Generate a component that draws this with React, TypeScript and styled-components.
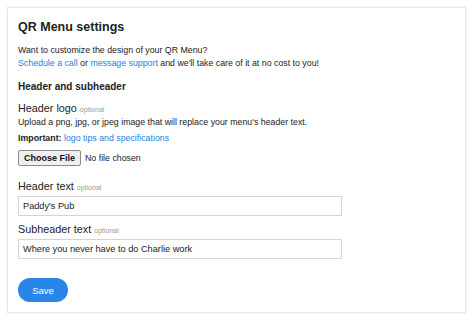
import React from "react";
import styled, { createGlobalStyle } from "styled-components";

const Global = createGlobalStyle`
  html, body { margin: 0; padding: 0; background: #fff; }
  body { font-family: "Liberation Sans", Arial, sans-serif; color: #222; }
`;

const Page = styled.div`
  padding: 7px 8px 8px 7px;
`;

const Card = styled.div`
  background: #fff;
  border: 1px solid #e6e6e6;
  box-shadow: 0 0 3px rgba(0, 0, 0, 0.08);
  padding: 12px 10px 10px 10px;
  height: 306px;
  box-sizing: border-box;
  display: flex;
  flex-direction: column;
`;

const Title = styled.h1`
  margin: 0 0 9px;
  font-size: 12.5px;
  line-height: 15px;
  font-weight: bold;
  color: #222;
`;

const Text = styled.p<{ $mb?: number }>`
  margin: 0 0 ${(p) => p.$mb ?? 0}px;
  font-size: 8.8px;
  line-height: 12.5px;
  color: #222;
`;

const A = styled.a`
  color: #1a7fe0;
  text-decoration: none;
`;

const Section = styled.h2`
  margin: 0 0 9px;
  font-size: 10px;
  line-height: 12px;
  font-weight: bold;
  color: #222;
`;

const Label = styled.div<{ $mb?: number }>`
  font-size: 10.8px;
  line-height: 12px;
  color: #222;
  margin-bottom: ${(p) => p.$mb ?? 1}px;
`;

const Optional = styled.span`
  font-size: 7px;
  color: #9a9a9a;
  margin-left: 3px;
`;

const FileRow = styled.div`
  display: flex;
  align-items: center;
  gap: 4px;
  height: 16px;
  margin: 6px 0 14px;
  font-size: 8.8px;
`;

const FileButton = styled.button`
  font-family: "Liberation Sans", Arial, sans-serif;
  font-weight: bold;
  font-size: 9px;
  height: 16px;
  padding: 0 5px;
  border: 1px solid #8a8a8a;
  border-radius: 2px;
  background: #efefef;
  color: #111;
`;

const Input = styled.input`
  width: 324px;
  height: 20px;
  box-sizing: border-box;
  border: 1px solid #d4d4d4;
  padding: 0 4px;
  font-family: "Liberation Sans", Arial, sans-serif;
  font-size: 9.2px;
  color: #222;
  outline: none;
`;

const Field = styled.div<{ $mb: number }>`
  margin-bottom: ${(p) => p.$mb}px;
`;

const SaveButton = styled.button`
  width: 50px;
  height: 24px;
  border: none;
  border-radius: 12px;
  background: #2a85e8;
  color: #fff;
  font-family: "Liberation Sans", Arial, sans-serif;
  font-size: 9.5px;
`;

export default function App() {
  return (
    <Page>
      <Global />
      <Card>
        <Title>QR Menu settings</Title>
        <Text>Want to customize the design of your QR Menu?</Text>
        <Text $mb={12}>
          <A href="#">Schedule a call</A> or <A href="#">message support</A> and we'll take care of it at no cost to you!
        </Text>
        <Section>Header and subheader</Section>
        <Label $mb={0}>
          Header logo<Optional>optional</Optional>
        </Label>
        <Text $mb={3}>Upload a png, jpg, or jpeg image that will replace your menu's header text.</Text>
        <Text>
          <b>Important:</b> <A href="#">logo tips and specifications</A>
        </Text>
        <FileRow>
          <FileButton>Choose File</FileButton>
          <span>No file chosen</span>
        </FileRow>
        <Field $mb={7}>
          <Label>
            Header text<Optional>optional</Optional>
          </Label>
          <Input defaultValue="Paddy's Pub" />
        </Field>
        <Field $mb={19}>
          <Label>
            Subheader text<Optional>optional</Optional>
          </Label>
          <Input defaultValue="Where you never have to do Charlie work" />
        </Field>
        <div>
          <SaveButton>Save</SaveButton>
        </div>
      </Card>
    </Page>
  );
}
